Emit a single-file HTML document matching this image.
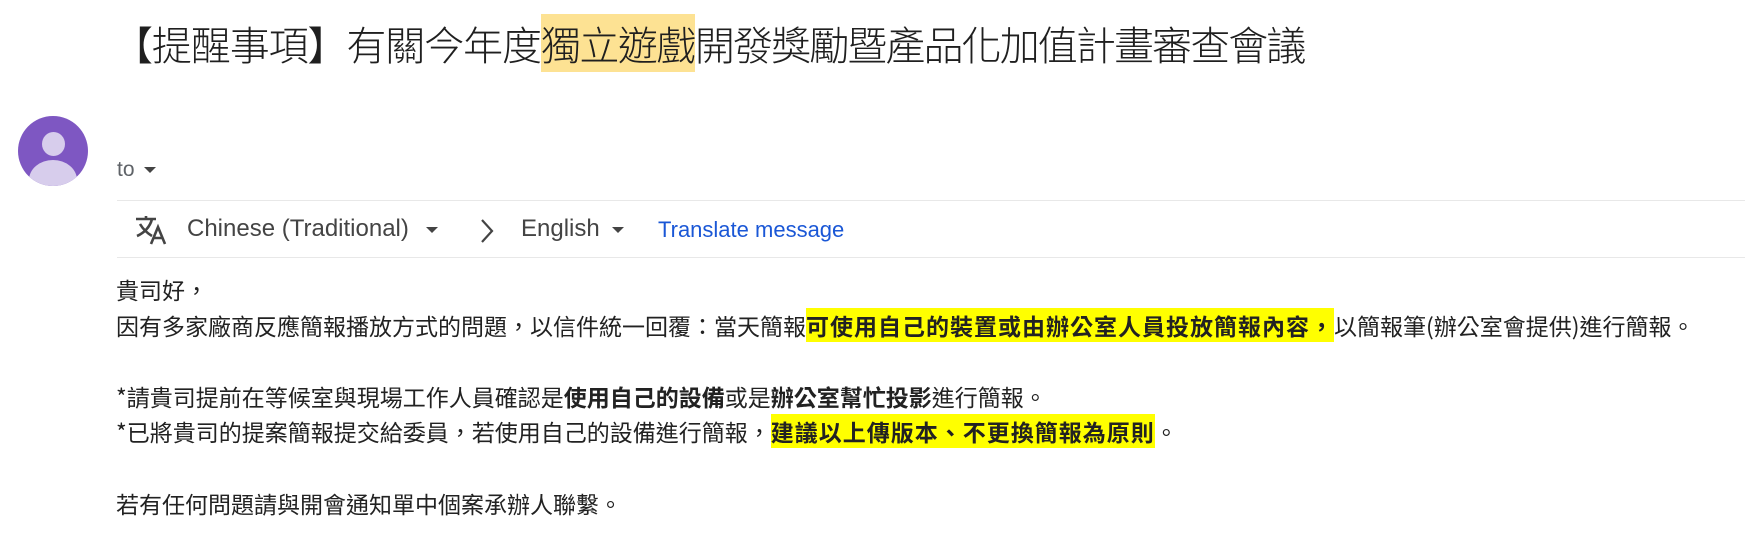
<!DOCTYPE html>
<html><head><meta charset="utf-8"><style>
html,body{margin:0;padding:0;background:#fff;width:1745px;height:560px;overflow:hidden}
body{font-family:"Liberation Sans","Noto Sans CJK TC",sans-serif;color:#222;position:relative}
.title{position:absolute;left:113px;top:18px;font-size:40px;line-height:50px;letter-spacing:-1.1px;color:#1f1f1f;white-space:nowrap;font-family:"Noto Sans CJK TC",sans-serif;font-weight:300}
.title .hl{background:#fde293;letter-spacing:-1.5px;padding-right:0}
.title .af{letter-spacing:-1.9px}
.av{position:absolute;left:18px;top:116px;width:70px;height:70px;border-radius:50%;background:#7e57c2;overflow:hidden}
.av .h{position:absolute;left:24px;top:16px;width:23px;height:24px;border-radius:50%;background:#d7cdec}
.av .b{position:absolute;left:11px;top:44px;width:48px;height:40px;border-radius:50%;background:#d7cdec}
.to{position:absolute;left:117px;top:158px;font-size:21px;color:#5f6368}
.line{position:absolute;left:117px;right:0;height:1px;background:#e8e8e8}
.tr{position:absolute;top:215px;font-size:24px;color:#444;white-space:nowrap}
.caret{display:inline-block;width:0;height:0;border-left:6px solid transparent;border-right:6px solid transparent;border-top:6px solid #444;vertical-align:middle}
.body{position:absolute;left:116px;top:272px;font-size:23px;line-height:35.6px;letter-spacing:0;color:#222;white-space:nowrap;font-family:"Noto Sans CJK TC",sans-serif}
.y{background:#ffff00;font-weight:bold;letter-spacing:1px}
b{font-weight:bold}
</style></head><body>
<div class="title">【提醒事項】有關今年度<span class="hl">獨立遊戲</span><span class="af">開發獎勵暨產品化加值計畫審查會議</span></div>
<div class="av"><div class="h"></div><div class="b"></div></div>
<div class="to">to <span class="caret" style="border-top-color:#444;margin-left:4px"></span></div>
<div class="line" style="top:200px"></div>
<div class="line" style="top:257px"></div>
<svg style="position:absolute;left:134px;top:215px" width="34" height="30" viewBox="0 0 34 30" fill="none" stroke="#444" stroke-width="2.6">
<path d="M2 4h20M12 1v3M18 4c-2 8-8 14-15 17M6 9c3 5 7 9 12 12"/>
<path d="M17 29l7-17 7 17M20 23h9"/>
</svg>
<div class="tr" style="left:187px">Chinese (Traditional) <span class="caret" style="margin-left:10px"></span></div>
<svg style="position:absolute;left:477px;top:217px" width="20" height="28" viewBox="0 0 20 28" fill="none" stroke="#444" stroke-width="2.2"><path d="M5 3l10 11-10 11"/></svg>
<div class="tr" style="left:521px">English <span class="caret" style="margin-left:6px"></span></div>
<div class="tr" style="left:658px;color:#1a57d6;font-size:22px;top:217px">Translate message</div>
<div class="body">貴司好，<br>因有多家廠商反應簡報播放方式的問題，以信件統一回覆：當天簡報<span class="y">可使用自己的裝置或由辦公室人員投放簡報內容，</span>以簡報筆(辦公室會提供)進行簡報。<br>&nbsp;<br>*請貴司提前在等候室與現場工作人員確認是<b>使用自己的設備</b>或是<b>辦公室幫忙投影</b>進行簡報。<br>*已將貴司的提案簡報提交給委員，若使用自己的設備進行簡報，<span class="y">建議以上傳版本、不更換簡報為原則</span>。<br>&nbsp;<br>若有任何問題請與開會通知單中個案承辦人聯繫。</div>
</body></html>
